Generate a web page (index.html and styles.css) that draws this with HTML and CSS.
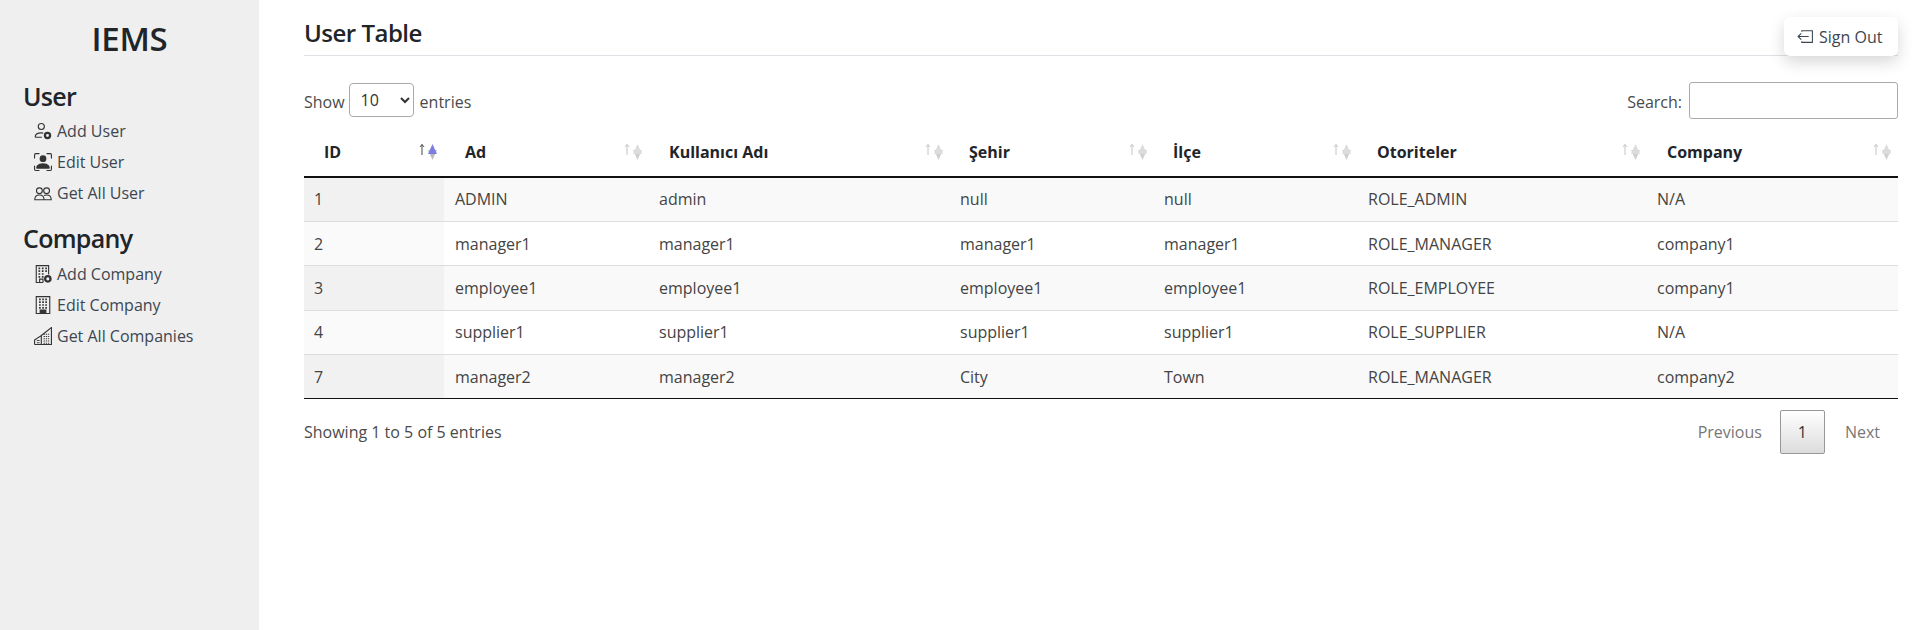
FILE: index.html
```html
<!DOCTYPE html>
<html lang="tr">
<head>
    <meta charset="UTF-8">
    <title>User Table</title>
    <link rel="stylesheet" href="styles.css">
</head>
<body>
<svg class="defs" width="0" height="0">
    <symbol id="sort" viewBox="0 0 20 20">
        <path class="down" d="M14.500 17 10 7h9z"/>
        <path class="tri" d="M14.500 1 19 11h-9z"/>
        <path class="up" d="M4 12V1.500M2 3.900 4 1.500l2 2.400" fill="none"/>
    </symbol>
</svg>
<aside class="sidebar">
    <h1>IEMS</h1>
    <h3>User</h3>
    <ul>
        <li>
            <svg viewBox="0 0 16 16" fill="none" stroke="currentColor"><circle cx="6.500" cy="4" r="2.700"/><path d="M1 13.500c0-2.500 2.500-3.800 5.500-3.800.6 0 1.200.1 1.700.2M1 13.500h6"/><circle cx="12" cy="12" r="2.300" stroke-width="2"/></svg>
            <a>Add User</a>
        </li>
        <li>
            <svg viewBox="0 0 16 16" fill="currentColor"><path d="M1.500 1a.5.5 0 0 0-.5.5v3a.5.5 0 0 1-1 0v-3A1.500 1.500 0 0 1 1.500 0h3a.5.5 0 0 1 0 1h-3zM11 .5a.5.5 0 0 1 .5-.5h3A1.500 1.500 0 0 1 16 1.500v3a.5.5 0 0 1-1 0v-3a.5.5 0 0 0-.5-.5h-3a.5.5 0 0 1-.5-.5zM.5 11a.5.5 0 0 1 .5.5v3a.5.5 0 0 0 .5.5h3a.5.5 0 0 1 0 1h-3A1.500 1.500 0 0 1 0 14.500v-3a.5.5 0 0 1 .5-.5zm15 0a.5.5 0 0 1 .5.5v3a1.500 1.500 0 0 1-1.500 1.500h-3a.5.5 0 0 1 0-1h3a.5.5 0 0 0 .5-.5v-3a.5.5 0 0 1 .5-.5z"/><path d="M3 14s-1 0-1-1 1-4 6-4 6 3 6 4-1 1-1 1H3zm8-9a3 3 0 1 1-6 0 3 3 0 0 1 6 0z"/></svg>
            <a>Edit User</a>
        </li>
        <li>
            <svg viewBox="0 0 16 16" fill="none" stroke="currentColor"><circle cx="4.800" cy="6" r="2.600"/><circle cx="11.200" cy="6" r="2.600"/><path d="M.7 14c0-2.800 1.800-4.200 4.100-4.200S8.900 11.200 8.900 14zM8.900 10.300c.6-.3 1.400-.5 2.300-.5 2.300 0 4.100 1.400 4.100 4.200H8.900"/></svg>
            <a>Get All User</a>
        </li>
    </ul>
    <h3>Company</h3>
    <ul>
        <li>
            <svg viewBox="0 0 16 16" fill="none" stroke="currentColor"><path d="M8 15.500H2V.5h11v8M5 15.500v-3h3v3"/><path d="M4 3h1.500M7 3h1.500M10 3h1.500M4 5.500h1.500M7 5.500h1.500M10 5.500h1.500M4 8h1.500M7 8h1.500M4 10.500h1.500M7 10.500h1.500" stroke-width="1.500"/><circle cx="12.300" cy="12.300" r="2.400" stroke-width="2"/></svg>
            <a>Add Company</a>
        </li>
        <li>
            <svg viewBox="0 0 16 16" fill="none" stroke="currentColor"><path d="M2 15.500V.5h12v15z"/><path d="M4.500 3H6M7.300 3h1.500M10 3h1.500M4.500 5.500H6M7.300 5.500h1.500M10 5.500h1.500M4.500 8H6M7.300 8h1.500M10 8h1.500M4.500 10.500H6M7.300 10.500h1.500M10 10.500h1.500" stroke-width="1.500"/><path d="M5.500 15.500V12.500h5v3z" fill="currentColor"/></svg>
            <a>Edit Company</a>
        </li>
        <li>
            <svg viewBox="0 0 16 16" fill="none" stroke="currentColor"><path d="M.5 15.500v-4l6-4v8M.5 15.500h15V.5L6.500 7.500"/><path d="M2.500 12H5M2.500 14H5" stroke-width=".8"/><path d="M8.500 6.500h5M8.500 8.500h5M8.500 10.500h5M8.500 12.500h5M8.500 14.500h5" stroke-width=".9" stroke-dasharray="1.200 .8"/></svg>
            <a>Get All Companies</a>
        </li>
    </ul>
</aside>
<main class="content">
    <header class="top">
        <h2>User Table</h2>
        <button class="signout">
            <svg viewBox="0 0 16 16" fill="none" stroke="currentColor"><path d="M4.500 3.500v-1h10v11h-10v-1"/><path d="M11 8H1M4 5 1 8l3 3"/></svg>
            Sign Out
        </button>
    </header>
    <div class="controls">
        <label><span>Show</span>
            <select><option>10</option></select>
            <span>entries</span></label>
        <label><span>Search:</span> <input type="search"></label>
    </div>
    <table class="grid">
        <colgroup>
            <col class="c1"><col class="c2"><col class="c3"><col class="c4"><col class="c5"><col class="c6"><col>
        </colgroup>
        <thead>
            <tr>
                <th class="asc">ID <svg><use href="#sort"/></svg></th>
                <th>Ad <svg><use href="#sort"/></svg></th>
                <th>Kullanıcı Adı <svg><use href="#sort"/></svg></th>
                <th>Şehir <svg><use href="#sort"/></svg></th>
                <th>İlçe <svg><use href="#sort"/></svg></th>
                <th>Otoriteler <svg><use href="#sort"/></svg></th>
                <th>Company <svg><use href="#sort"/></svg></th>
            </tr>
        </thead>
        <tbody>
            <tr><td>1</td><td>ADMIN</td><td>admin</td><td>null</td><td>null</td><td>ROLE_ADMIN</td><td>N/A</td></tr>
            <tr><td>2</td><td>manager1</td><td>manager1</td><td>manager1</td><td>manager1</td><td>ROLE_MANAGER</td><td>company1</td></tr>
            <tr><td>3</td><td>employee1</td><td>employee1</td><td>employee1</td><td>employee1</td><td>ROLE_EMPLOYEE</td><td>company1</td></tr>
            <tr><td>4</td><td>supplier1</td><td>supplier1</td><td>supplier1</td><td>supplier1</td><td>ROLE_SUPPLIER</td><td>N/A</td></tr>
            <tr><td>7</td><td>manager2</td><td>manager2</td><td>City</td><td>Town</td><td>ROLE_MANAGER</td><td>company2</td></tr>
        </tbody>
    </table>
    <div class="foot">
        <span>Showing 1 to 5 of 5 entries</span>
        <div class="pager">
            <a>Previous</a>
            <a class="current">1</a>
            <a>Next</a>
        </div>
    </div>
</main>
</body>
</html>
```

FILE: styles.css
```css
* {box-sizing: border-box;}
body {margin: 0; display: flex; min-height: 630px; font-family: "Open Sans", "Noto Sans", sans-serif; font-size: 16px; color: #212529; background: #fff;}
.defs {position: absolute;}

.sidebar {width: 259px; flex: none; background: #efefef; padding: 15px 23px;}
.sidebar h1 {margin: 0 0 16px; text-align: center; font-size: 33px; line-height: 47px; font-weight: 600; letter-spacing: -.3px;}
.sidebar h3 {margin: 0 0 1px; font-size: 25px; line-height: 36px; font-weight: 600; letter-spacing: -.7px;}
.sidebar ul {margin: 0 0 12px; padding: 0; list-style: none;}
.sidebar ul + h3 {margin-bottom: 2px;}
.sidebar li {display: flex; align-items: center; height: 31px; padding-left: 11px; color: #3d4650;}
.sidebar li svg {width: 18px; height: 18px; margin-right: 5px; flex: none; color: #333;}

.content {flex: 1; padding: 0 20px 0 45px;}
.top {display: flex; justify-content: space-between; align-items: flex-start; height: 56px; border-bottom: 1px solid #dee2e6;}
.top h2 {margin: 16px 0 0; font-size: 24px; line-height: 33px; font-weight: 600; letter-spacing: -.5px;}
.signout {display: flex; align-items: center; gap: 5px; height: 39px; width: 114px; margin-top: 17px; padding: 0 0 0 13px; border: 0; border-radius: 6px; background: #fff; box-shadow: 0 6px 16px rgba(0, 0, 0, .16); font: inherit; color: #3d4650;}
.signout svg {width: 17px; height: 17px;}

.controls {display: flex; justify-content: space-between; align-items: center; height: 37px; margin-top: 26px; color: #4a4a4a;}
.controls label {display: flex; align-items: center; gap: 4px;}
.controls span {padding-top: 3px;}
.controls select {width: 65px; height: 34px; margin: 0 2px 1px 0; padding-left: 7px; border: 1px solid #aaa; border-radius: 4px; background: #fff; font: inherit; color: #333;}
.controls input {width: 209px; height: 37px; margin-left: 3px; border: 1px solid #aaa; border-radius: 3px; background: #fff;}

.grid {width: 100%; margin-top: 12px; border-collapse: collapse; table-layout: fixed;}
.c1 {width: 140px;}
.c2 {width: 205px;}
.c3 {width: 301px;}
.c4 {width: 204px;}
.c5 {width: 204px;}
.c6 {width: 289px;}
.grid th {position: relative; height: 46px; padding: 0 26px 4px 20px; border-bottom: 2px solid #111; text-align: left; font-weight: 700; --up: #c4c4c4; --tri: #dcdcdc; --down: #d0d0d0;}
.grid th.asc {--up: #444; --tri: #7d7de0; --down: #bbb;}
.grid th svg {position: absolute; top: 12px; right: 6px; width: 20px; height: 20px;}
.grid th:nth-child(2) {padding-left: 21px;}
.grid th:nth-child(n+4):nth-child(-n+6) {padding-left: 19px;}
.up {stroke: var(--up);}
.tri {fill: var(--tri);}
.down {fill: var(--down);}
.grid td {height: 44.400px; padding: 0 10px; border-bottom: 1px solid #ddd; color: #444;}
.grid td:nth-child(2) {padding-left: 11px;}
.grid tbody tr:nth-child(odd) {background: #f9f9f9;}
.grid tbody td:first-child {background: #fafafa;}
.grid tbody tr:nth-child(odd) td:first-child {background: #f1f1f1;}
.grid tbody tr:last-child td {border-bottom: 1px solid #111;}

.foot {display: flex; justify-content: space-between; align-items: center; margin-top: 11px; color: #4a4a4a;}
.pager {display: flex; align-items: center;}
.pager a {display: block; padding: 0 18px; line-height: 42px; color: #777;}
.pager a.current {height: 44px; width: 45px; margin: 0 2px 0 0; padding: 0; text-align: center; border: 1px solid #979797; border-radius: 2px; background: linear-gradient(#fff, #dcdcdc); color: #333;}
```
